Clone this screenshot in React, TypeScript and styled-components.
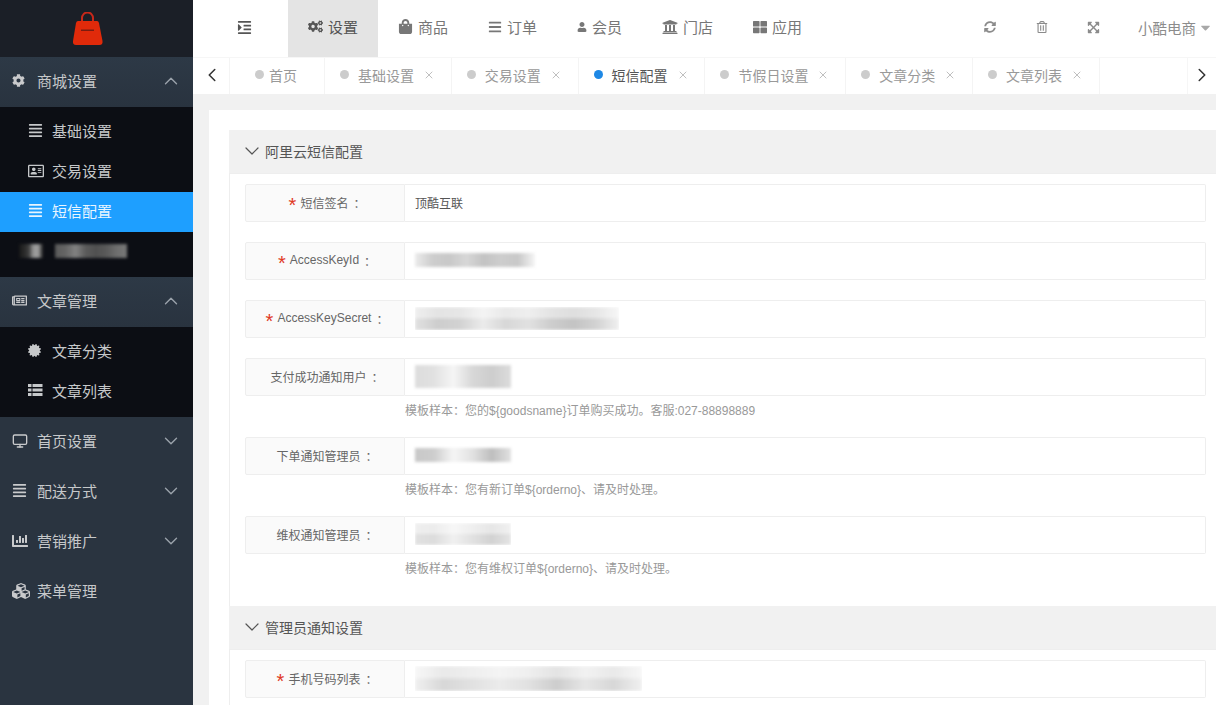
import { type ReactNode } from 'react';
import styled, { createGlobalStyle } from 'styled-components';
import { ChevronDown, ChevronLeft, ChevronRight, ChevronUp, Monitor, X } from 'lucide-react';
import {
  FaAlignJustify,
  FaBars,
  FaCaretDown,
  FaCertificate,
  FaChartBar,
  FaCog,
  FaCogs,
  FaCubes,
  FaExpandArrowsAlt,
  FaIndent,
  FaRegAddressCard,
  FaRegNewspaper,
  FaRegTrashAlt,
  FaShoppingBag,
  FaSyncAlt,
  FaThLarge,
  FaUniversity,
  FaUser,
} from 'react-icons/fa';

const GlobalStyle = createGlobalStyle`
  html, body {
    margin: 0;
    height: 100%;
    overflow: hidden;
    background: #f1f1f1;
    font-family: "Liberation Sans", "Noto Sans CJK SC", sans-serif;
  }
  * {
    box-sizing: border-box;
  }
`;

const navItems = [
  { label: '设置', icon: <FaCogs size={15} />, active: true },
  { label: '商品', icon: <FaShoppingBag size={15} /> },
  { label: '订单', icon: <FaBars size={14} /> },
  { label: '会员', icon: <FaUser size={10} /> },
  { label: '门店', icon: <FaUniversity size={16} /> },
  { label: '应用', icon: <FaThLarge size={14} /> },
];

const tabs = [
  { label: '基础设置', closable: true },
  { label: '交易设置', closable: true },
  { label: '短信配置', closable: true, active: true },
  { label: '节假日设置', closable: true },
  { label: '文章分类', closable: true },
  { label: '文章列表', closable: true },
];

function Blur({ tones, w, h, fade }: { tones: number[]; w: number; h: number; fade?: boolean }) {
  // the reference hides these values behind a mosaic
  const stops = tones.map((t) => `rgb(${t},${t},${t})`).join(',');
  return <Smudge $fade={fade} style={{ width: w, height: h, background: `linear-gradient(90deg,${stops})` }} />;
}

function Field(props: { label: string; required?: boolean; help?: string; children?: ReactNode }) {
  return (
    <FieldWrap>
      <FieldRow>
        <FieldLabel>
          {props.required && <Star>*</Star>}
          {props.label}
          <Colon>：</Colon>
        </FieldLabel>
        <FieldInput>{props.children}</FieldInput>
      </FieldRow>
      {props.help && <Help>{props.help}</Help>}
    </FieldWrap>
  );
}

const Arrow = ({ up }: { up?: boolean }) => (
  <Chevron>{up ? <ChevronUp size={22} strokeWidth={1.5} /> : <ChevronDown size={22} strokeWidth={1.5} />}</Chevron>
);

const ListIcon = () => (
  <svg width="15" height="13" viewBox="0 0 15 13" fill="currentColor">
    <rect y="0" width="3.500" height="3" />
    <rect x="4.500" y="0" width="10" height="3" />
    <rect y="4.500" width="3.500" height="3" />
    <rect x="4.500" y="4.500" width="10" height="3" />
    <rect y="9" width="3.500" height="3" />
    <rect x="4.500" y="9" width="10" height="3" />
  </svg>
);

export default function App() {
  return (
    <Page>
      <GlobalStyle />
      <Sidebar>
        <Logo>
          <svg width="31" height="33" viewBox="0 0 31 33">
            <path d="M10 11V6a5.500 5.500 0 0 1 11 0v5" fill="none" stroke="#c8281a" strokeWidth="2" />
            <path d="M6 9h19q1.500 0 2 2l3.500 18q.5 4-3 4H4q-3.500 0-3-4L4 11q.5-2 2-2z" fill="#e02a0a" />
            <rect x="9" y="17.500" width="13" height="1.500" fill="#7a1c10" />
          </svg>
        </Logo>
        <GroupHead $open>
          <GroupIcon><FaCog size={13} /></GroupIcon>
          商城设置
          <Arrow up />
        </GroupHead>
        <SubMenu>
          <SubItem><SubIcon><FaAlignJustify size={15} /></SubIcon>基础设置</SubItem>
          <SubItem><SubIcon><FaRegAddressCard size={16} /></SubIcon>交易设置</SubItem>
          <SubItem $active><SubIcon><FaAlignJustify size={15} /></SubIcon>短信配置</SubItem>
          <SubItem $hidden>
            <Blur w={24} h={14} tones={[24, 40, 60, 150, 160, 30]} />
            <Blur w={72} h={14} tones={[90, 100, 130, 90, 80, 90, 110, 120]} />
          </SubItem>
        </SubMenu>
        <GroupHead $open>
          <GroupIcon><FaRegNewspaper size={15} /></GroupIcon>
          文章管理
          <Arrow up />
        </GroupHead>
        <SubMenu>
          <SubItem><SubIcon><FaCertificate size={13} /></SubIcon>文章分类</SubItem>
          <SubItem><SubIcon><ListIcon /></SubIcon>文章列表</SubItem>
        </SubMenu>
        <GroupHead>
          <GroupIcon><Monitor size={16} /></GroupIcon>
          首页设置
          <Arrow />
        </GroupHead>
        <GroupHead>
          <GroupIcon><FaAlignJustify size={15} /></GroupIcon>
          配送方式
          <Arrow />
        </GroupHead>
        <GroupHead>
          <GroupIcon><FaChartBar size={16} /></GroupIcon>
          营销推广
          <Arrow />
        </GroupHead>
        <GroupHead>
          <GroupIcon><FaCubes size={18} /></GroupIcon>
          菜单管理
        </GroupHead>
      </Sidebar>

      <Main>
        <TopBar>
          <Toggler><FaIndent size={15} /></Toggler>
          {navItems.map((item) => (
            <NavItem key={item.label} $active={item.active}>
              {item.icon}
              <NavText>{item.label}</NavText>
            </NavItem>
          ))}
          <TopRight>
            <ToolButton><FaSyncAlt size={12} /></ToolButton>
            <ToolButton><FaRegTrashAlt size={12} /></ToolButton>
            <ToolButton><FaExpandArrowsAlt size={13} /></ToolButton>
            <UserName>小酷电商<FaCaretDown size={15} /></UserName>
          </TopRight>
        </TopBar>

        <TabBar>
          <TabArrow><ChevronLeft size={22} strokeWidth={1.7} /></TabArrow>
          <TabList>
            <Tab $home>
              <TabDot />
              首页
            </Tab>
            {tabs.map((t) => (
              <Tab key={t.label} $active={t.active}>
                <TabDot $active={t.active} />
                {t.label}
                <TabClose><X size={12} strokeWidth={1.5} /></TabClose>
              </Tab>
            ))}
          </TabList>
          <TabArrow $right><ChevronRight size={22} strokeWidth={1.7} /></TabArrow>
        </TabBar>

        <Content>
          <Card>
            <SectionHead><ChevronDown size={24} strokeWidth={1.2} />阿里云短信配置</SectionHead>
            <SectionBody>
              <Field label="短信签名" required>顶酷互联</Field>
              <Field label="AccessKeyId" required>
                <Blur w={120} h={14} tones={[235, 205, 200, 215, 195, 205, 200, 245]} />
              </Field>
              <Field label="AccessKeySecret" required>
                <Blur fade w={204} h={23} tones={[225, 205, 210, 235, 215, 225, 205, 195, 210, 240]} />
              </Field>
              <Field label="支付成功通知用户" help="模板样本：您的${goodsname}订单购买成功。客服:027-88898889">
                <Blur w={96} h={23} tones={[220, 225, 245, 215, 205, 220]} />
              </Field>
              <Field label="下单通知管理员" help="模板样本：您有新订单${orderno}、请及时处理。">
                <Blur w={96} h={14} tones={[200, 205, 245, 225, 190, 225]} />
              </Field>
              <Field label="维权通知管理员" help="模板样本：您有维权订单${orderno}、请及时处理。">
                <Blur fade w={96} h={22} tones={[225, 220, 240, 225, 210, 228]} />
              </Field>
            </SectionBody>
            <SectionHead><ChevronDown size={24} strokeWidth={1.2} />管理员通知设置</SectionHead>
            <SectionBody>
              <Field label="手机号码列表" required>
                <Blur fade w={227} h={25} tones={[240, 215, 225, 235, 225, 205, 230, 215, 240]} />
              </Field>
            </SectionBody>
          </Card>
        </Content>
      </Main>
    </Page>
  );
}

const Page = styled.div`
  display: flex;
  height: 705px;
  overflow: hidden;
`;

const Sidebar = styled.aside`
  flex: 0 0 193px;
  background: #2a3440;
  color: #c6c8ca;
  font-size: 15px;
`;

const Logo = styled.div`
  display: flex;
  align-items: center;
  justify-content: center;
  height: 57px;
  padding-right: 18px;
  background: #1b1f27;
`;

const GroupHead = styled.div<{ $open?: boolean }>`
  display: flex;
  align-items: center;
  height: 50px;
  padding: 0 11px 3px 12px;
  background: ${(p) => (p.$open ? 'linear-gradient(#2d3946, #29333f)' : 'transparent')};
`;

const GroupIcon = styled.span`
  display: flex;
  flex: 0 0 25px;
  color: #c9cacc;
`;

const Chevron = styled.span`
  display: flex;
  margin-left: auto;
  color: #9ba3ab;
`;

const SubMenu = styled.div`
  padding: 5px 0;
  background: #0c0e14;
`;

const SubItem = styled.div<{ $active?: boolean; $hidden?: boolean }>`
  display: flex;
  align-items: center;
  gap: ${(p) => (p.$hidden ? '12px' : '0')};
  height: 40px;
  padding-bottom: 3px;
  padding-left: ${(p) => (p.$hidden ? '19px' : '28px')};
  background: ${(p) => (p.$active ? '#1e9fff' : 'transparent')};
  color: ${(p) => (p.$active ? '#e8f5ff' : '#c6c8ca')};
`;

const SubIcon = styled.span`
  display: flex;
  flex: 0 0 24px;
`;

const Smudge = styled.div<{ $fade?: boolean }>`
  flex: none;
  filter: blur(1.5px);
  mask-image: ${(p) => (p.$fade ? 'linear-gradient(rgba(0,0,0,.55) 40%, #000 60%)' : 'none')};
`;

const Main = styled.main`
  display: flex;
  flex: 1;
  flex-direction: column;
  min-width: 0;
`;

const TopBar = styled.header`
  display: flex;
  flex: 0 0 57px;
  background: #fff;
  color: #777;
  font-size: 14px;
`;

const Toggler = styled.div`
  display: flex;
  flex: 0 0 95px;
  align-items: center;
  justify-content: center;
  padding: 0 0 3px 7px;
  color: #555;
`;

const NavItem = styled.div<{ $active?: boolean }>`
  display: flex;
  align-items: center;
  gap: 5px;
  padding: 0 20px 4px;
  background: ${(p) => (p.$active ? '#e4e4e4' : 'transparent')};
  color: ${(p) => (p.$active ? '#555' : '#777')};
`;

const NavText = styled.span`
  width: 30px;
  font-size: 15px;
  white-space: nowrap;
`;

const TopRight = styled.div`
  display: flex;
  align-items: center;
  margin-left: auto;
  padding-bottom: 3px;
`;

const ToolButton = styled.div`
  display: flex;
  justify-content: center;
  width: 51.500px;
  color: #8b8b8b;
`;

const UserName = styled.div`
  display: flex;
  align-items: center;
  gap: 2px;
  margin-left: 19px;
  padding-right: 3px;
  color: #8c8c8c;
  font-size: 14.500px;
  white-space: nowrap;

  svg {
    color: #a8a8a8;
  }
`;

const TabBar = styled.nav`
  display: flex;
  flex: 0 0 37px;
  background: #fff;
  border-top: 1px solid #f6f6f6;
`;

const TabArrow = styled.div<{ $right?: boolean }>`
  display: flex;
  flex: 0 0 ${(p) => (p.$right ? '29px' : '37px')};
  align-items: center;
  justify-content: center;
  padding-bottom: 2px;
  border-left: ${(p) => (p.$right ? '1px solid #f6f6f6' : 'none')};
  color: #333;
`;

const TabList = styled.div`
  display: flex;
  flex: 1;
  min-width: 0;
  margin-left: -1px;
  border-left: 1px solid #f4f4f4;
`;

const Tab = styled.div<{ $active?: boolean; $home?: boolean }>`
  display: flex;
  flex: none;
  align-items: center;
  padding: ${(p) => (p.$home ? '0 27px 3px 25px' : '0 15.800px 3px 15px')};
  border-right: 1px solid #f4f4f4;
  color: ${(p) => (p.$active ? '#555' : '#999')};
  font-size: 14px;
  white-space: nowrap;
`;

const TabDot = styled.i<{ $active?: boolean }>`
  flex: none;
  width: 9px;
  height: 9px;
  margin-right: 9px;
  border-radius: 50%;
  background: ${(p) => (p.$active ? '#1e88e5' : '#ccc')};

  ${Tab}:first-child > & {
    margin-right: 5px;
  }
`;

const TabClose = styled.span`
  display: flex;
  margin-left: 9px;
  color: #aaa;
`;

const Content = styled.div`
  flex: 1;
  overflow: hidden;
  padding: 16px 0 0 16px;
  background: #f1f1f1;
`;

const Card = styled.section`
  min-height: 100%;
  padding: 20px 0 0 20px;
  background: #fff;
`;

const SectionHead = styled.h3`
  display: flex;
  align-items: center;
  gap: 1px;
  height: 44px;
  margin: 0;
  padding: 0 0 2px 11px;
  border-bottom: 1px solid #eee;
  background: #f1f1f1;
  color: #555;
  font-size: 14px;
  font-weight: normal;
`;

const SectionBody = styled.div`
  padding: 10px 10px 11px 15px;
  border-left: 1px solid #eee;
`;

const FieldWrap = styled.div`
  margin-bottom: 20px;
`;

const FieldRow = styled.div`
  display: flex;
  height: 38px;
`;

const FieldLabel = styled.label`
  display: flex;
  flex: 0 0 160px;
  align-items: center;
  justify-content: center;
  padding-bottom: 2px;
  border: 1px solid #eee;
  border-radius: 2px 0 0 2px;
  background: #fafafa;
  color: #666;
  font-size: 12px;
  white-space: nowrap;
`;

const Star = styled.span`
  margin: 6px 4px 0 0;
  color: #e0391f;
  font-size: 20px;
  line-height: 16px;
`;

const Colon = styled.span`
  width: 8px;
  margin-left: 5px;
`;

const FieldInput = styled.div`
  display: flex;
  flex: 1;
  align-items: center;
  padding: 0 0 2px 10px;
  border: 1px solid #eee;
  border-left: 0;
  border-radius: 0 2px 2px 0;
  color: #555;
  font-size: 12px;
`;

const Help = styled.div`
  margin: 7px 0 -2px 160px;
  color: #999;
  font-size: 12px;
  line-height: 16px;
`;
